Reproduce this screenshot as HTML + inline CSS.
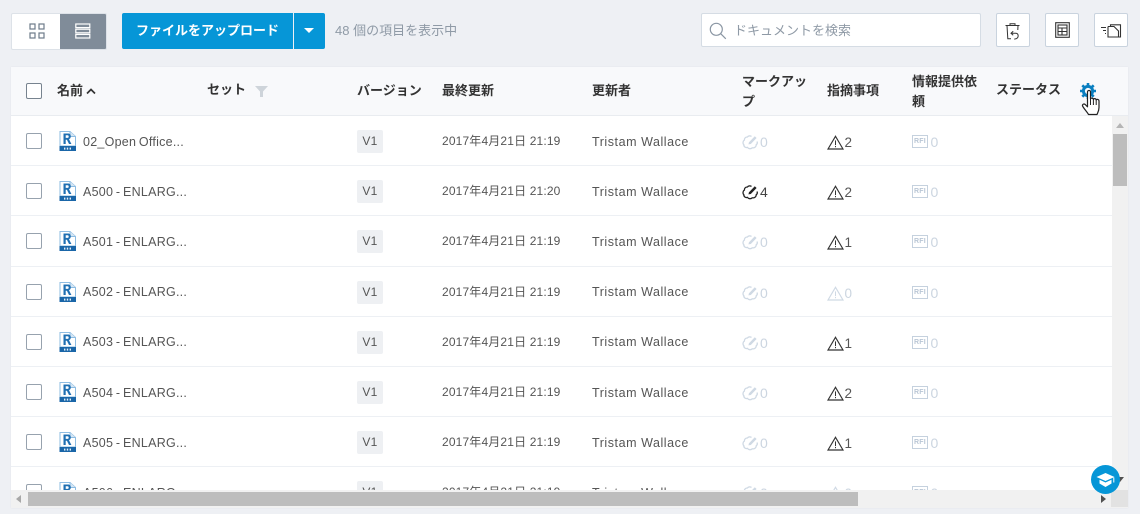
<!DOCTYPE html>
<html lang="ja"><head><meta charset="utf-8"><title>ドキュメント</title>
<style>
*{box-sizing:border-box}
html,body{margin:0;padding:0;width:1140px;height:514px;overflow:hidden;background:#eef0f4;font-family:"Liberation Sans","Noto Sans CJK JP",sans-serif;color:#3c3c3c}
.a{position:absolute}
.card{position:absolute;left:11px;top:67px;width:1117px;height:441px;background:#fff;box-shadow:0 0 1px rgba(120,130,145,.15);overflow:hidden}
.hd{position:absolute;left:0;top:0;width:1117px;height:49px;background:#f8f9fb;border-bottom:1px solid #e9ecf0}
.h{position:absolute;font-size:13px;font-weight:700;line-height:20px;color:#333;white-space:nowrap}
.body{position:absolute;left:0;top:49px;width:1117px;height:374px;overflow:hidden}
.r{position:absolute;left:0;width:1101px;height:50.2px;border-bottom:1px solid #edf0f4}
.r>*{position:absolute}
.cb{left:15px;top:17px;width:16px;height:16px;border:1.5px solid #97a2ae;border-radius:2px;background:#fff}
.fi{left:48px;top:15px;width:17px;height:20px}
.nm{left:72px;top:16.5px;font-size:12.5px;line-height:18px;letter-spacing:.25px;word-spacing:-1px;color:#555;white-space:nowrap}
.v{left:346px;top:14px;width:26px;height:23px;background:#eef0f3;border-radius:2px;font-size:12px;line-height:23px;text-align:center;color:#555;letter-spacing:.3px}
.d{left:431px;top:16px;font-size:12px;line-height:18px;letter-spacing:.15px;color:#555;white-space:nowrap}
.u{left:581px;top:16.5px;font-size:12.5px;line-height:18px;letter-spacing:.55px;color:#555;white-space:nowrap}
.mi{left:731px;top:18px;width:17px;height:17px}
.mn{left:749px;top:17px;font-size:14px;line-height:19px;color:#cbd5e0}
.mn.k{color:#444}
.ti{left:816px;top:19px;width:17px;height:15px}
.tn{left:833.5px;top:17px;font-size:13.5px;line-height:19px;color:#555}
.tn.o{color:#cbd5e0}
.rf{left:901px;top:19px;width:16px;height:13px;border:1px solid #c5d1de;font-size:7px;line-height:11px;text-align:center;color:#b9c6d5;letter-spacing:.2px;font-weight:700}
.rn{left:919.5px;top:17px;font-size:14px;line-height:19px;color:#cbd5e0}
.ib{position:absolute;top:13px;width:34px;height:34px;background:#fff;border:1px solid #c9d3de;border-radius:2px}
</style></head>
<body>
<svg width="0" height="0" style="position:absolute">
<symbol id="rvt" viewBox="0 0 17 20"><path d="M1 .5H11L16.5 5.5V15H1Z" fill="#fff" stroke="#8dbce2"/><path d="M11 .5V5.5H16.5" fill="#d5e6f4" stroke="#8dbce2"/><path d="M4.5 2.5H9C11 2.5 11.8 3.8 11.8 5.4C11.8 6.9 11 7.8 10 8.2L12.4 13H10L7.9 8.7H6.7V13H4.5ZM6.7 4.3V6.9H8.6C9.3 6.9 9.7 6.3 9.7 5.6C9.7 4.9 9.3 4.3 8.6 4.3Z" fill="#1f6fb2"/><rect x=".5" y="15" width="16.5" height="5" fill="#1a66a8"/><rect x="5" y="16.6" width="1.4" height="2" fill="#e3eef8"/><rect x="7.8" y="16.6" width="1.4" height="2" fill="#e3eef8"/><rect x="10.6" y="16.6" width="1.4" height="2" fill="#e3eef8"/></symbol>
<symbol id="mk" viewBox="0 0 17 17"><path d="M9.5 2.4C8.2 1.6 6.4 1.7 5.4 3C3.7 2.9 2.2 4.3 2.4 6.1C.8 7 .5 9.4 1.8 10.6C1.7 12.6 3.6 14 5.4 13.4C6.6 15 9 15.1 10.2 13.8C12.2 14.3 14.3 12.8 14.2 10.8C15.2 10 15.5 8.6 15 7.5" fill="none" stroke="currentColor" stroke-width="1.3"/><path d="M6.4 10.4L7 8.2L12.8 2.2L14.6 4L8.8 10Z" fill="currentColor"/></symbol>
<symbol id="tr" viewBox="0 0 17 15"><path d="M8.5 1.3L16 14H1Z" fill="none" stroke="currentColor" stroke-width="1.15"/><rect x="8" y="5.4" width="1" height="4.6" fill="currentColor"/><rect x="8" y="10.9" width="1" height="1.3" fill="currentColor"/></symbol>
</svg>

<!-- view toggle -->
<div class="a" style="left:11px;top:13px;width:96px;height:37px;border:1px solid #dde2e8;border-radius:2px;background:#fff;overflow:hidden">
  <div class="a" style="left:48px;top:0;width:47px;height:35px;background:#808c99"></div>
  <svg class="a" style="left:17px;top:9px" width="16" height="16" viewBox="0 0 16 16" fill="none" stroke="#6d7b8a" stroke-width="1.2"><rect x="1" y="1" width="5" height="5"/><rect x="10" y="1" width="5" height="5"/><rect x="1" y="10" width="5" height="5"/><rect x="10" y="10" width="5" height="5"/></svg>
  <svg class="a" style="left:63px;top:9px" width="16" height="16" viewBox="0 0 16 16" fill="none" stroke="#fff" stroke-width="1.2"><rect x=".8" y="1" width="14" height="3.6"/><rect x=".8" y="6.2" width="14" height="3.6"/><rect x=".8" y="11.4" width="14" height="3.6"/></svg>
</div>

<!-- upload -->
<div class="a" style="left:122px;top:13px;width:171px;height:36px;background:#0696d7;border-radius:2px 0 0 2px;color:#fff;font-size:13px;font-weight:700;line-height:36px;text-align:center;white-space:nowrap">ファイルをアップロード</div>
<div class="a" style="left:294px;top:13px;width:31px;height:36px;background:#0696d7;border-radius:0 2px 2px 0"></div>
<div class="a" style="left:304px;top:28px;width:0;height:0;border-left:5px solid transparent;border-right:5px solid transparent;border-top:5px solid #fff"></div>
<div class="a" style="left:335px;top:22px;font-size:13px;line-height:18px;color:#8f9aa6;white-space:nowrap">48 個の項目を表示中</div>

<!-- search -->
<div class="a" style="left:701px;top:13px;width:280px;height:34px;background:#fff;border:1px solid #d5dce4;border-radius:2px"></div>
<svg class="a" style="left:709px;top:22px" width="18" height="18" viewBox="0 0 18 18" fill="none" stroke="#8a96a3" stroke-width="1.2"><circle cx="7.3" cy="7.3" r="6"/><path d="M11.6 11.6L16.8 16.8"/></svg>
<div class="a" style="left:734px;top:22px;font-size:13px;line-height:18px;color:#8f9aa6;white-space:nowrap">ドキュメントを検索</div>

<!-- tool buttons -->
<div class="ib" style="left:996px"><svg class="a" style="left:8px;top:9px" width="16" height="17" viewBox="0 0 16 17" fill="none" stroke="#333" stroke-width="1"><path d="M.5 2.5H14.5M5 2.5V.8H10V2.5M2 2.5L2.8 15.8H6M13 2.5L12.8 7"/><path d="M8.2 8.2L6 10.2L8.2 12.2M6 10.2H10.8C13.6 10.2 14 14.4 11.4 15.6L9.2 16.2"/></svg></div>
<div class="ib" style="left:1045px"><svg class="a" style="left:9px;top:8px" width="15" height="16" viewBox="0 0 15 16" fill="none" stroke="#333" stroke-width="1.1"><rect x=".7" y=".7" width="13.6" height="14.6"/><rect x="3" y="3" width="9" height="10"/><path d="M3 6H12M3 9.5H12M7 6V13"/></svg></div>
<div class="ib" style="left:1094px"><svg class="a" style="left:5px;top:10px" width="22" height="14" viewBox="0 0 22 14" fill="none" stroke="#333" stroke-width="1.1"><path d="M1 3.5H6M3 6.5H6M5 9.5H6"/><path d="M8 2.5V13H20.5V.8H10.5V2.5M8 2.5H14L18.5 7V13"/></svg></div>

<div class="card">
  <div class="hd">
    <div class="a" style="left:15px;top:16px;width:16px;height:16px;border:1.5px solid #77838f;border-radius:2px;background:#fff"></div>
    <div class="h" style="left:46px;top:14px">名前</div>
    <svg class="a" style="left:75px;top:20px" width="10" height="8" viewBox="0 0 10 8" fill="none" stroke="#333" stroke-width="1.7"><path d="M1 6.5L5 2.5L9 6.5"/></svg>
    <div class="h" style="left:196px;top:13px">セット</div>
    <svg class="a" style="left:244px;top:19px" width="13" height="11" viewBox="0 0 13 11"><path d="M0 0H13L8 5.5V11H5V5.5Z" fill="#ced4da"/></svg>
    <div class="h" style="left:346px;top:14px">バージョン</div>
    <div class="h" style="left:431px;top:14px">最終更新</div>
    <div class="h" style="left:581px;top:14px">更新者</div>
    <div class="h" style="left:731px;top:5px;width:66px;white-space:normal">マークアップ</div>
    <div class="h" style="left:816px;top:14px">指摘事項</div>
    <div class="h" style="left:901px;top:5px;width:66px;white-space:normal">情報提供依頼</div>
    <div class="h" style="left:985px;top:13px">ステータス</div>
    <svg class="a" style="left:1069px;top:16px" width="16" height="16" viewBox="0 0 16 16"><circle cx="8" cy="8" r="4.6" fill="none" stroke="#0a7fc0" stroke-width="3"/><path d="M8 0V3M8 13V16M0 8H3M13 8H16M2.3 2.3L4.4 4.4M11.6 11.6L13.7 13.7M2.3 13.7L4.4 11.6M11.6 4.4L13.7 2.3" stroke="#0a7fc0" stroke-width="2.6"/></svg>
  </div>

  <div class="body">
    <div class="r" style="top:0"><span class="cb"></span><svg class="fi"><use href="#rvt"/></svg><span class="nm">02_Open Office...</span><span class="v">V1</span><span class="d">2017年4月21日 21:19</span><span class="u">Tristam Wallace</span><svg class="mi" style="color:#cfd9e4"><use href="#mk"/></svg><span class="mn">0</span><svg class="ti" style="color:#333"><use href="#tr"/></svg><span class="tn">2</span><span class="rf">RFI</span><span class="rn">0</span></div>
    <div class="r" style="top:50.2px"><span class="cb"></span><svg class="fi"><use href="#rvt"/></svg><span class="nm">A500 - ENLARG...</span><span class="v">V1</span><span class="d">2017年4月21日 21:20</span><span class="u">Tristam Wallace</span><svg class="mi" style="color:#222"><use href="#mk"/></svg><span class="mn k">4</span><svg class="ti" style="color:#333"><use href="#tr"/></svg><span class="tn">2</span><span class="rf">RFI</span><span class="rn">0</span></div>
    <div class="r" style="top:100.4px"><span class="cb"></span><svg class="fi"><use href="#rvt"/></svg><span class="nm">A501 - ENLARG...</span><span class="v">V1</span><span class="d">2017年4月21日 21:19</span><span class="u">Tristam Wallace</span><svg class="mi" style="color:#cfd9e4"><use href="#mk"/></svg><span class="mn">0</span><svg class="ti" style="color:#333"><use href="#tr"/></svg><span class="tn">1</span><span class="rf">RFI</span><span class="rn">0</span></div>
    <div class="r" style="top:150.6px"><span class="cb"></span><svg class="fi"><use href="#rvt"/></svg><span class="nm">A502 - ENLARG...</span><span class="v">V1</span><span class="d">2017年4月21日 21:19</span><span class="u">Tristam Wallace</span><svg class="mi" style="color:#cfd9e4"><use href="#mk"/></svg><span class="mn">0</span><svg class="ti" style="color:#cfd9e4"><use href="#tr"/></svg><span class="tn o">0</span><span class="rf">RFI</span><span class="rn">0</span></div>
    <div class="r" style="top:200.8px"><span class="cb"></span><svg class="fi"><use href="#rvt"/></svg><span class="nm">A503 - ENLARG...</span><span class="v">V1</span><span class="d">2017年4月21日 21:19</span><span class="u">Tristam Wallace</span><svg class="mi" style="color:#cfd9e4"><use href="#mk"/></svg><span class="mn">0</span><svg class="ti" style="color:#333"><use href="#tr"/></svg><span class="tn">1</span><span class="rf">RFI</span><span class="rn">0</span></div>
    <div class="r" style="top:251px"><span class="cb"></span><svg class="fi"><use href="#rvt"/></svg><span class="nm">A504 - ENLARG...</span><span class="v">V1</span><span class="d">2017年4月21日 21:19</span><span class="u">Tristam Wallace</span><svg class="mi" style="color:#cfd9e4"><use href="#mk"/></svg><span class="mn">0</span><svg class="ti" style="color:#333"><use href="#tr"/></svg><span class="tn">2</span><span class="rf">RFI</span><span class="rn">0</span></div>
    <div class="r" style="top:301.2px"><span class="cb"></span><svg class="fi"><use href="#rvt"/></svg><span class="nm">A505 - ENLARG...</span><span class="v">V1</span><span class="d">2017年4月21日 21:19</span><span class="u">Tristam Wallace</span><svg class="mi" style="color:#cfd9e4"><use href="#mk"/></svg><span class="mn">0</span><svg class="ti" style="color:#333"><use href="#tr"/></svg><span class="tn">1</span><span class="rf">RFI</span><span class="rn">0</span></div>
    <div class="r" style="top:351.4px"><span class="cb"></span><svg class="fi"><use href="#rvt"/></svg><span class="nm">A506 - ENLARG...</span><span class="v">V1</span><span class="d">2017年4月21日 21:19</span><span class="u">Tristam Wallace</span><svg class="mi" style="color:#cfd9e4"><use href="#mk"/></svg><span class="mn">0</span><svg class="ti" style="color:#cfd9e4"><use href="#tr"/></svg><span class="tn o">0</span><span class="rf">RFI</span><span class="rn">0</span></div>
    <!-- vertical scrollbar -->
    <div class="a" style="left:1101px;top:0;width:16px;height:374px;background:#f1f1f1"></div>
    <div class="a" style="left:1102px;top:18px;width:14px;height:52px;background:#bdbdbd"></div>
    <div class="a" style="left:1105px;top:7px;width:0;height:0;border-left:4px solid transparent;border-right:4px solid transparent;border-bottom:5px solid #b5b5b5"></div>
    <div class="a" style="left:1105px;top:361px;width:0;height:0;border-left:4px solid transparent;border-right:4px solid transparent;border-top:5px solid #505050"></div>
  </div>

  <!-- horizontal scrollbar -->
  <div class="a" style="left:0;top:423px;width:1117px;height:18px;background:#f1f1f1"></div>
  <div class="a" style="left:17px;top:425px;width:830px;height:14px;background:#bdbdbd"></div>
  <div class="a" style="left:5px;top:428px;width:0;height:0;border-top:4px solid transparent;border-bottom:4px solid transparent;border-right:5px solid #a8a8a8"></div>
  <div class="a" style="left:1090px;top:428px;width:0;height:0;border-top:4px solid transparent;border-bottom:4px solid transparent;border-left:5px solid #505050"></div>
  <div class="a" style="left:1100px;top:423px;width:17px;height:17px;background:#e2e2e2"></div>
</div>

<!-- help badge -->
<div class="a" style="left:1091px;top:465px;width:29px;height:29px;border-radius:50%;background:#0696d7"></div>
<svg class="a" style="left:1096px;top:472px" width="20" height="16" viewBox="0 0 20 16"><path d="M9.5 1L18.5 5L9.5 9L.5 5Z" fill="#fff"/><path d="M3.5 7.8L9.5 10.5L15.5 7.8V11.5L9.5 15L3.5 11.5Z" fill="#fff"/><path d="M17.8 5.6V10.5" stroke="#fff" stroke-width="1"/></svg>

<!-- hand cursor -->
<svg class="a" style="left:1081px;top:89px" width="22" height="27" viewBox="0 0 22 27"><path d="M6.5 3C6.5 .9 9.5 .9 9.5 3V10C9.7 8.8 12.2 8.8 12.4 10.4C12.8 9.2 15 9.3 15.2 11C15.8 10 18 10.2 18 12.2V18.5C18 22 16.5 24 16 25.5H7.5C6.5 23.5 4 21 1.8 17.5C.7 15.6 2.8 14.2 4.2 15.5L6.5 17.8Z" fill="#fff" stroke="#222" stroke-width="1.2" stroke-linejoin="round"/><path d="M9.5 10V16M12.4 10.4V16M15.2 11V16" stroke="#222" stroke-width="1"/></svg>
</body></html>
